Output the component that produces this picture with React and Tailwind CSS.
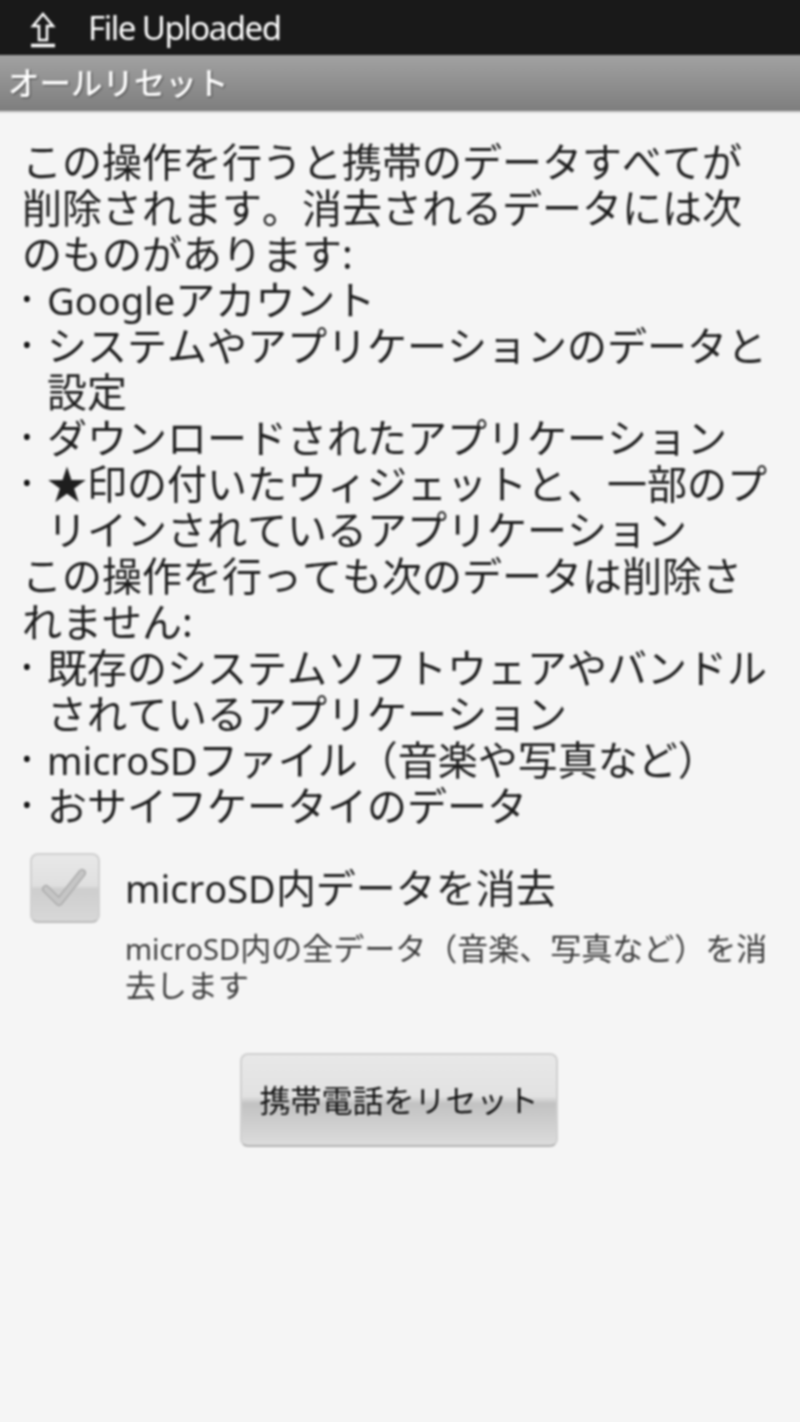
import React from 'react';

const font = { fontFamily: '"Noto Sans", "Noto Sans CJK JP", sans-serif' };

const Bullet = ({ children }) => (
    <div className="flex">
        <span className="w-[25px] shrink-0 text-[26px] leading-[42px] text-[#111]">•</span>
        <div>{children}</div>
    </div>
);

const Line = ({ children }) => <div className="whitespace-nowrap">{children}</div>;

// latin runs are a bit narrower than the kana in the reference
const Latin = ({ children }) => <span className="text-[38px]">{children}</span>;

const App = () => {
    return (
        <div className="w-[800px] h-[1422px] overflow-hidden bg-[#f5f5f5]">
            <div
                className="w-[808px] h-[1430px] -mx-[4px] -mt-[4px] pt-[4px] px-[4px] flex flex-col blur-[0.8px] [text-spacing-trim:space-all] [font-kerning:none] bg-[#f5f5f5]"
                style={font}
            >
                {/* status bar */}
                <div className="h-[55px] -mt-[4px] pt-[4px] box-content -mx-[4px] bg-[#191919] flex items-center pl-[34px] shrink-0">
                    <svg className="mt-[4px]" width="26" height="36" viewBox="0 0 26 36" fill="none" stroke="#ffffff" strokeWidth="2.5">
                        <path d="M13 2 L23 14 H17 V28 H9 V14 H3 Z" strokeLinejoin="miter" />
                        <path d="M1 33.5 H25" strokeWidth="3.5" />
                    </svg>
                    <span className="ml-[32px] text-[33px] leading-none text-white tracking-[-1.5px]">File Uploaded</span>
                </div>

                {/* title */}
                <div className="h-[58px] shrink-0 -mx-[4px] pl-[12px] bg-gradient-to-b from-[#a2a2a2] to-[#7e7e7e] border-b-2 border-[#d8d8d8] flex items-center">
                    <span className="text-[31.5px] leading-none text-white font-medium [text-shadow:1px_1px_2px_#444]">オールリセット</span>
                </div>

                {/* message */}
                <div className="pt-[26px] pl-[22px] text-[40px] leading-[46px] text-[#1e1e1e]">
                    <Line>この操作を行うと携帯のデータすべてが</Line>
                    <Line>削除されます。消去されるデータには次</Line>
                    <Line>のものがあります:</Line>
                    <Bullet><Line><Latin>Google</Latin>アカウント</Line></Bullet>
                    <Bullet>
                        <Line>システムやアプリケーションのデータと</Line>
                        <Line>設定</Line>
                    </Bullet>
                    <Bullet><Line>ダウンロードされたアプリケーション</Line></Bullet>
                    <Bullet>
                        <Line>★印の付いたウィジェットと、一部のプ</Line>
                        <Line>リインされているアプリケーション</Line>
                    </Bullet>
                    <Line>この操作を行っても次のデータは削除さ</Line>
                    <Line>れません:</Line>
                    <Bullet>
                        <Line>既存のシステムソフトウェアやバンドル</Line>
                        <Line>されているアプリケーション</Line>
                    </Bullet>
                    <Bullet><Line><Latin>microSD</Latin>ファイル（音楽や写真など）</Line></Bullet>
                    <Bullet><Line>おサイフケータイのデータ</Line></Bullet>
                </div>

                {/* microSD option */}
                <div className="flex mt-[24px] pl-[30px]">
                    <div className="w-[70px] h-[70px] shrink-0 rounded-[8px] border-2 border-[#d0d0d0] border-b-[#bcbcbc] bg-[linear-gradient(#e8e8e8_0%,#e0e0e0_46%,#cecece_52%,#d8d8d8_100%)] flex items-center justify-center">
                        <svg width="50" height="44" viewBox="0 0 50 44" fill="none" strokeLinecap="round" strokeLinejoin="round">
                            <path d="M6 23 L19 36 L42 7" stroke="#acacac" strokeWidth="8" />
                            <path d="M6 23 L19 36 L42 7" stroke="#c6c6c6" strokeWidth="5" />
                        </svg>
                    </div>
                    <div className="ml-[25px]">
                        <div className="text-[40px] leading-[70px] text-[#222] whitespace-nowrap"><Latin>microSD</Latin>内データを消去</div>
                        <div className="text-[31px] leading-[37px] text-[#3c3c3c] mt-[7px]">
                            <Line><span className="text-[29px]">microSD</span>内の全データ（音楽、写真など）を消</Line>
                            <Line>去します</Line>
                        </div>
                    </div>
                </div>

                {/* reset button */}
                <div className="flex justify-center mt-[49px] pr-[2px]">
                    <button className="w-[318px] h-[94px] rounded-[8px] border-2 border-[#d0d0d0] border-b-[#b4b4b4] bg-[linear-gradient(#e8e8e8_0%,#e2e2e2_46%,#c2c2c2_54%,#dcdcdc_100%)] text-[31px] leading-none text-[#111]">
                        携帯電話をリセット
                    </button>
                </div>
            </div>
        </div>
    );
};

export default App;
